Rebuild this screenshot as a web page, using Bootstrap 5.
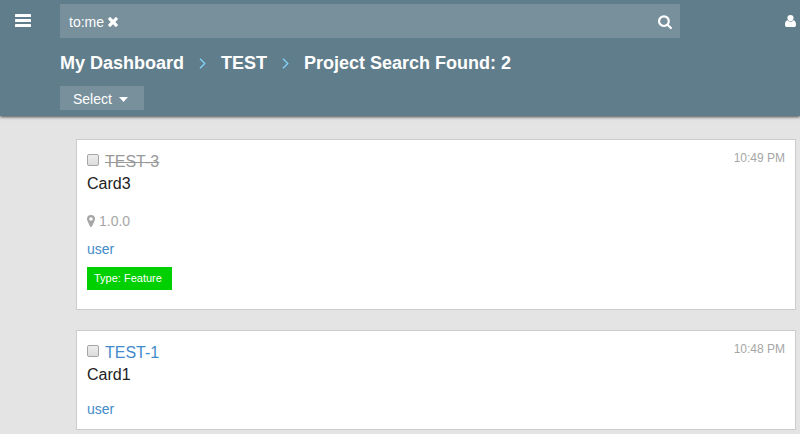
<!DOCTYPE html>
<html lang="en">
<head>
<meta charset="utf-8">
<meta name="viewport" content="width=device-width, initial-scale=1">
<title>Project Search</title>
<link href="https://cdn.jsdelivr.net/npm/bootstrap@5.3.0/dist/css/bootstrap.min.css" rel="stylesheet">
<style>
  body { background: #e4e4e4; color: #222; font: 14px/20px "Liberation Sans", Arial, sans-serif; }
  svg { display: block; fill: currentColor; }
  a { color: #428bca; text-decoration: none; }
  .topbar { background: #607d8b; color: #fff; padding: 4px 0 6px; box-shadow: 0 1px 3px rgba(0,0,0,.7); }
  .topbar a { color: #fff; }
  .side-left { width: 60px; padding: 2px 0 0 15px; }
  .side-right { width: 120px; padding-right: 4px; }
  .search-box { height: 34px; background: #78909c; padding: 2px 8px 0 9px; }
  .search-box input { outline: 0; color: #fff; }
  .plain-btn { background: none; border: 0; padding: 0; color: #fff; }
  .below { padding-left: 60px; }
  .crumbs { font-size: 18px; line-height: 24px; font-weight: bold; margin: 13px 0 11px; gap: 15px; }
  .crumbs svg { fill: none; stroke: #81d4fa; stroke-width: 1.3; }
  .select-btn { height: 24px; background: #78909c; color: #fff; border: 0; border-radius: 0; padding: 2px 16px 0 13px; font-size: 14px; line-height: 20px; gap: 7px; }
  .results { padding: 23px 4px 4px 76px; gap: 20px; }
  .result { border: 1px solid #ccc; border-radius: 0; padding: 11px 10px 10px; }
  .result-id, .result-name { font-size: 16px; line-height: 22px; }
  .result-id { gap: 6px; }
  .closed-link { color: #999; text-decoration: line-through; }
  .tick { appearance: none; width: 12px; height: 12px; margin: 0 0 4px; border: 1px solid #a5a5a5; border-radius: 2px; background: linear-gradient(#ededed, #dcdcdc); }
  .stamp { font-size: 12px; line-height: 14px; color: #a6a6a6; }
  .meta { margin-top: 13px; }
  .version { color: #a6a6a6; gap: 4px; padding-top: 3px; margin-bottom: 8px; }
  .type-label { background: #00cf00; color: #fff; font-size: 11px; line-height: 23px; padding: 0 10px 0 7px; margin: 8px 0 9px; }
</style>
<script src="https://cdn.jsdelivr.net/npm/bootstrap@5.3.0/dist/js/bootstrap.bundle.min.js"></script>
</head>
<body>
<header class="topbar position-relative">
  <div class="d-flex align-items-center">
    <div class="side-left flex-shrink-0">
      <button class="plain-btn" type="button" aria-label="Menu">
        <svg width="16" height="13" viewBox="0 0 16 13"><rect width="16" height="3" rx=".6"/><rect y="5" width="16" height="3" rx=".6"/><rect y="10" width="16" height="3" rx=".6"/></svg>
      </button>
    </div>
    <form class="search-box d-flex align-items-center flex-grow-1">
      <span>to:me</span>
      <button class="plain-btn ms-1" type="button" aria-label="Remove filter">
        <svg width="10" height="10" viewBox="0 0 10 10"><path d="M2.6.3 5 2.700 7.400.3Q7.900-.1 8.400.3L9.700 1.600Q10.100 2.100 9.700 2.600L7.300 5l2.400 2.400q.4.5 0 1L8.400 9.700q-.5.4-1 0L5 7.300 2.600 9.700q-.5.4-1 0L.3 8.400q-.4-.5 0-1L2.700 5 .3 2.600q-.4-.5 0-1L1.600.3q.5-.4 1 0z"/></svg>
      </button>
      <input class="plain-btn flex-grow-1 ms-2" type="text" aria-label="Search">
      <button class="plain-btn" type="submit" aria-label="Run search">
        <svg width="14" height="15" viewBox="0 100 1664 1792"><path d="M1152 832q0-185-131.500-316.500T704 384 387.500 515.500 256 832t131.500 316.500T704 1280t316.500-131.500T1152 832zm512 832q0 52-38 90t-90 38q-54 0-90-38l-343-342q-179 124-399 124-143 0-273.500-55.500t-225-150-150-225T0 832t55.500-273.500 150-225 225-150T704 128t273.500 55.500 225 150 150 225T1408 832q0 220-124 399l343 343q37 37 37 90z"/></svg>
      </button>
    </form>
    <div class="side-right flex-shrink-0 d-flex justify-content-end">
      <button class="plain-btn" type="button" aria-label="Account">
        <svg width="11" height="12" viewBox="0 0 11 12"><circle cx="5.500" cy="3.100" r="3.100"/><path d="M2.600 5.200Q5.500 8.200 8.400 5.200C10.300 5.300 11 7.300 11 9.700 11 11.100 10.200 12 9 12H2C.8 12 0 11.100 0 9.700 0 7.300.7 5.300 2.600 5.200z"/></svg>
      </button>
    </div>
  </div>
  <div class="below">
    <nav class="crumbs d-flex align-items-center" aria-label="Breadcrumb">
      <a href="#">My Dashboard</a>
      <svg width="7" height="11" viewBox="0 0 7 11"><path d="M1 .8 5.800 5.500 1 10.200"/></svg>
      <a href="#">TEST</a>
      <svg width="7" height="11" viewBox="0 0 7 11"><path d="M1 .8 5.800 5.500 1 10.200"/></svg>
      <span>Project Search Found: 2</span>
    </nav>
    <button class="select-btn btn d-flex align-items-center" type="button">Select
      <svg width="9" height="5" viewBox="0 0 9 5"><path d="M0 0h9L4.500 5z"/></svg>
    </button>
  </div>
</header>
<main class="results d-flex flex-column">
  <article class="result card">
    <div class="d-flex justify-content-between align-items-start">
      <div class="result-id d-flex align-items-center">
        <input class="tick" type="checkbox" aria-labelledby="id3">
        <a class="closed-link" id="id3" href="#">TEST-3</a>
      </div>
      <time class="stamp">10:49 PM</time>
    </div>
    <div class="result-name">Card3</div>
    <div class="meta">
      <div class="version d-flex align-items-center">
        <svg width="8" height="12" viewBox="0 0 8 12"><path fill-rule="evenodd" d="M4 0a4 4 0 0 1 4 4q0 .9-.3 1.500L5.100 11.300Q4.700 12 4 12t-1.100-.7L.3 5.500Q0 4.900 0 4a4 4 0 0 1 4-4zm0 2.200a1.800 1.800 0 1 0 0 3.600 1.800 1.800 0 0 0 0-3.600z"/></svg>
        <span>1.0.0</span>
      </div>
      <a class="d-block" href="#">user</a>
      <span class="type-label d-inline-block">Type: Feature</span>
    </div>
  </article>
  <article class="result card">
    <div class="d-flex justify-content-between align-items-start">
      <div class="result-id d-flex align-items-center">
        <input class="tick" type="checkbox" aria-labelledby="id1">
        <a id="id1" href="#">TEST-1</a>
      </div>
      <time class="stamp">10:48 PM</time>
    </div>
    <div class="result-name">Card1</div>
    <div class="meta"><a href="#">user</a></div>
  </article>
</main>
</body>
</html>
